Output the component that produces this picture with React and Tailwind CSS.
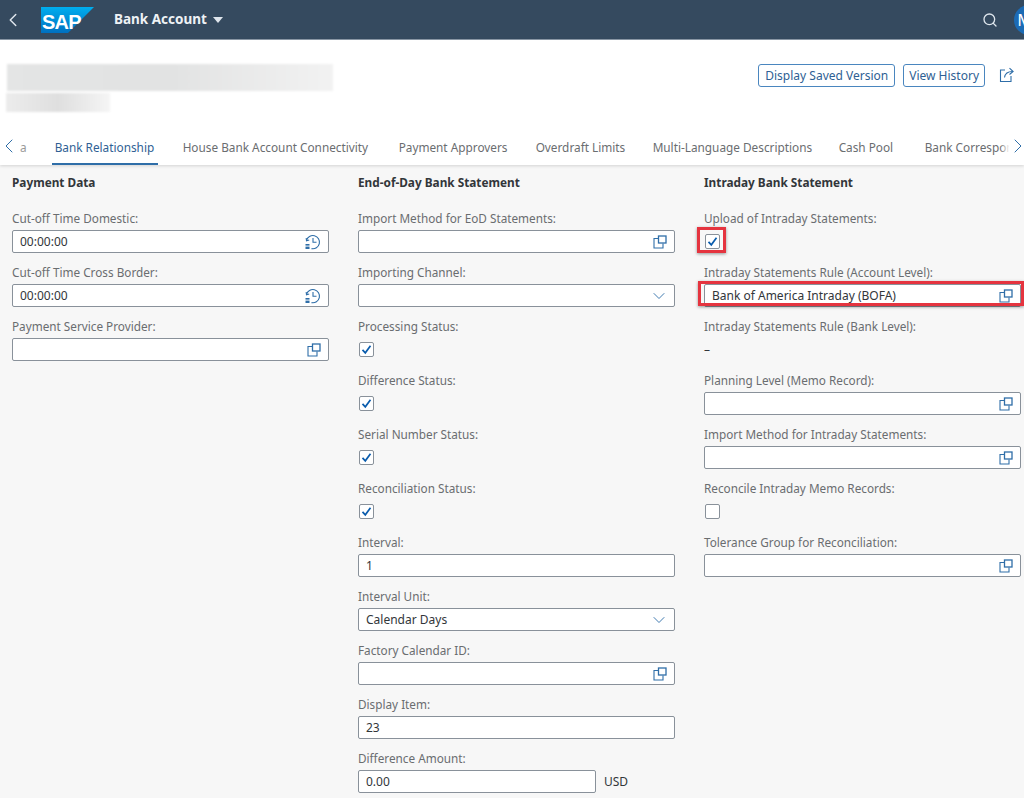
import React from "react";
import { ChevronLeft, ChevronRight, ChevronDown, Search } from "lucide-react";

const tabs = [
  { name: "Bank Relationship", width: "w-[100px]" },
  { name: "House Bank Account Connectivity", width: "w-[188px]" },
  { name: "Payment Approvers", width: "w-[109px]" },
  { name: "Overdraft Limits", width: "w-[89px]" },
  { name: "Multi-Language Descriptions", width: "w-[158px]" },
  { name: "Cash Pool", width: "w-[58px]" },
  { name: "Bank Correspondence", width: "w-[120px]" },
];

function ValueHelpIcon() {
  return (
    <svg width="14" height="14" viewBox="0 0 14 14" fill="none" stroke="#2f6ea8" strokeWidth="1.1">
      <path d="M5.5 3.5H1V13H10V8.5" />
      <rect x="5.5" y="1" width="7.5" height="7" strokeWidth="1.3" />
    </svg>
  );
}

function ClockIcon() {
  return (
    <svg width="16" height="16" viewBox="0 0 16 16" fill="none" stroke="#2f6ea8" strokeWidth="1.1">
      <path d="M1.5 6.5A6.6 6.6 0 1 1 6.5 14.6" />
      <path d="M1.2 4l.3 2.8L4.2 6" />
      <path d="M8 4v4.3h3.5" />
      <rect x="0.5" y="10" width="4" height="1.6" fill="#2f6ea8" stroke="none" />
      <rect x="0.5" y="12.6" width="4" height="2.4" fill="#2f6ea8" stroke="none" />
    </svg>
  );
}

function ShareIcon() {
  return (
    <svg width="16" height="16" viewBox="0 0 16 16" fill="none" stroke="#2f6ea8" strokeWidth="1.1">
      <path d="M6 3H1.5v11.5h10.5V9" />
      <path d="M5.5 10.5C6 7 8.5 4.5 13.5 4.5" />
      <path d="M10.5 1.2l3.6 3.3-3.6 3" />
    </svg>
  );
}

function Input({ value, icon, width = "w-full" }) {
  return (
    <div className={`${width} h-[23px] flex items-center justify-between bg-white border border-[#89919a] rounded-[2px] pl-[7px] pr-[7px] text-[#32363a]`}>
      <span>{value}</span>
      {icon === "help" && <ValueHelpIcon />}
      {icon === "time" && <ClockIcon />}
      {icon === "down" && <ChevronDown size={20} strokeWidth={1.1} className="-mr-[2px] text-[#2f6ea8]" />}
    </div>
  );
}

function Checkbox({ checked }) {
  return (
    <div className="h-[23px] flex items-center pl-px">
      <div className="w-[15px] h-[15px] flex items-center justify-center bg-white border border-[#89919a] rounded-[2px]">
        {checked && (
          <svg width="11" height="11" viewBox="0 0 11 11" fill="none" stroke="#0a5cad" strokeWidth="1.7">
            <path d="M1.5 5.8L4.3 8.8L9.5 1.8" />
          </svg>
        )}
      </div>
    </div>
  );
}

function Field({ label, children }) {
  return (
    <div className="h-[54px] flex flex-col justify-end pb-[9px]">
      <div className="h-[22px] leading-[20px] text-[11.75px] text-[#6a6d70]">{label}</div>
      {children}
    </div>
  );
}

function Column({ title, children }) {
  return (
    <div className="w-[317px] shrink-0">
      <div className="h-[36px] flex items-center font-bold text-[11.8px] text-[#32363a] mb-[7px]">{title}</div>
      {children}
    </div>
  );
}

export default function App() {
  return (
    <div className="w-[1024px] h-[798px] overflow-hidden bg-[#f7f7f7] text-[12px] font-['Noto_Sans','Open_Sans',sans-serif]">
      {/* Shell bar */}
      <header className="h-10 flex items-center bg-[#354a5f] border-b border-[#8d9aa8] text-white">
        <ChevronLeft size={22} strokeWidth={1.6} className="ml-[2px] text-[#dfe6ed]" />
        <div className="relative ml-[17px] w-[54px] h-[26px]">
          <svg width="54" height="26" viewBox="0 0 54 26">
            <defs>
              <linearGradient id="sap" x1="0" y1="0" x2="0" y2="1">
                <stop offset="0" stopColor="#00aeef" />
                <stop offset="1" stopColor="#0070c0" />
              </linearGradient>
            </defs>
            <polygon points="0,0 53,0 27,26 0,26" fill="url(#sap)" />
          </svg>
          <span className="absolute left-[1px] top-[4px] text-[20px] leading-[22px] font-bold tracking-[-0.8px] font-['Liberation_Sans',sans-serif]">SAP</span>
        </div>
        <span className="ml-[19px] text-[13.5px] font-bold text-[#eef2f5]">Bank Account</span>
        <svg width="10" height="6" viewBox="0 0 10 6" className="ml-[6px] fill-[#dfe6ed]">
          <polygon points="0,0 10,0 5,6" />
        </svg>
        <Search size={16} strokeWidth={2} className="ml-auto mr-[16px] text-[#dfe6ed]" />
        <div className="w-[30px] h-[30px] -mr-5 shrink-0 flex items-center justify-center rounded-full bg-[#1c6bb5] pr-2 text-[17px]">M</div>
      </header>

      {/* Object header and tabs */}
      <section className="h-[125px] bg-white shadow-[0_1px_3px_rgba(0,0,0,0.15)] relative">
        <div className="flex justify-between h-[86px] pt-[24px] pl-[6px] pr-[9px]">
          <div>
            <div className="ml-px w-[326px] h-[27px] bg-linear-to-r from-[#e4e5e5] via-[#e2e3e3] to-[#f2f2f2] blur-[1px]" />
            <div className="mt-[2px] w-[104px] h-[19px] bg-linear-to-r from-[#ececec] via-[#dfdfdf] to-[#f5f5f5] blur-[1px]" />
          </div>
          <div className="flex items-start">
            <button className="h-[23px] px-[6px] border border-[#4a86bf] rounded-[3px] text-[#2f5f94]">Display Saved Version</button>
            <button className="h-[23px] ml-2 px-[5px] border border-[#4a86bf] rounded-[3px] text-[#2f5f94]">View History</button>
            <div className="ml-[14px] mt-[3px]"><ShareIcon /></div>
          </div>
        </div>
        <div className="relative h-[39px] overflow-hidden">
          <nav className="flex h-full gap-[28px] pl-[20px] items-start whitespace-nowrap text-[11.8px] text-[#6a6d70]">
            <span className="pt-[13px] text-[#9a9a9a]">a</span>
            {tabs.map((tab, idx) => (
              <div key={tab.name} className={`${tab.width} shrink-0 h-full pt-[13px] relative ${idx === 0 ? "text-[#2f5f94]" : ""}`}>
                {tab.name}
                {idx === 0 && <div className="absolute -left-[3px] -right-[3px] bottom-0 h-[2px] bg-[#2f6ea8]" />}
              </div>
            ))}
          </nav>
          <ChevronLeft size={24} strokeWidth={1} className="absolute -left-[3px] top-[8px] text-[#2f6ea8]" />
          <div className="absolute right-0 top-0 h-full w-[24px] flex items-start justify-end bg-linear-to-r from-transparent to-white to-40%">
            <ChevronRight size={24} strokeWidth={1} className="mt-[8px] -mr-[6px] text-[#2f6ea8]" />
          </div>
        </div>
      </section>

      {/* Form columns */}
      <main className="flex gap-[29px] pl-[12px]">
        <Column title="Payment Data">
          <Field label="Cut-off Time Domestic:"><Input value="00:00:00" icon="time" /></Field>
          <Field label="Cut-off Time Cross Border:"><Input value="00:00:00" icon="time" /></Field>
          <Field label="Payment Service Provider:"><Input icon="help" /></Field>
        </Column>

        <Column title="End-of-Day Bank Statement">
          <Field label="Import Method for EoD Statements:"><Input icon="help" /></Field>
          <Field label="Importing Channel:"><Input icon="down" /></Field>
          <Field label="Processing Status:"><Checkbox checked /></Field>
          <Field label="Difference Status:"><Checkbox checked /></Field>
          <Field label="Serial Number Status:"><Checkbox checked /></Field>
          <Field label="Reconciliation Status:"><Checkbox checked /></Field>
          <Field label="Interval:"><Input value="1" /></Field>
          <Field label="Interval Unit:"><Input value="Calendar Days" icon="down" /></Field>
          <Field label="Factory Calendar ID:"><Input icon="help" /></Field>
          <Field label="Display Item:"><Input value="23" /></Field>
          <Field label="Difference Amount:">
            <div className="flex items-center">
              <Input value="0.00" width="w-[238px]" />
              <span className="ml-2 text-[#32363a]">USD</span>
            </div>
          </Field>
        </Column>

        <Column title="Intraday Bank Statement">
          <Field label="Upload of Intraday Statements:">
            <div className="relative">
              <Checkbox checked />
              <div className="absolute -left-[7px] -top-[3px] w-[29px] h-[26px] border-[3px] border-[#e5343f] shadow-[0_1px_3px_rgba(0,0,0,0.4)]" />
            </div>
          </Field>
          <Field label="Intraday Statements Rule (Account Level):">
            <div className="relative">
              <Input value="Bank of America Intraday (BOFA)" icon="help" />
              <div className="absolute -left-[6px] -top-[3px] w-[326px] h-[25px] border-[3px] border-[#e5343f] shadow-[0_1px_3px_rgba(0,0,0,0.4)]" />
            </div>
          </Field>
          <Field label="Intraday Statements Rule (Bank Level):">
            <div className="h-[23px] leading-[23px] text-[#32363a]">–</div>
          </Field>
          <Field label="Planning Level (Memo Record):"><Input icon="help" /></Field>
          <Field label="Import Method for Intraday Statements:"><Input icon="help" /></Field>
          <Field label="Reconcile Intraday Memo Records:"><Checkbox /></Field>
          <Field label="Tolerance Group for Reconciliation:"><Input icon="help" /></Field>
        </Column>
      </main>
    </div>
  );
}
